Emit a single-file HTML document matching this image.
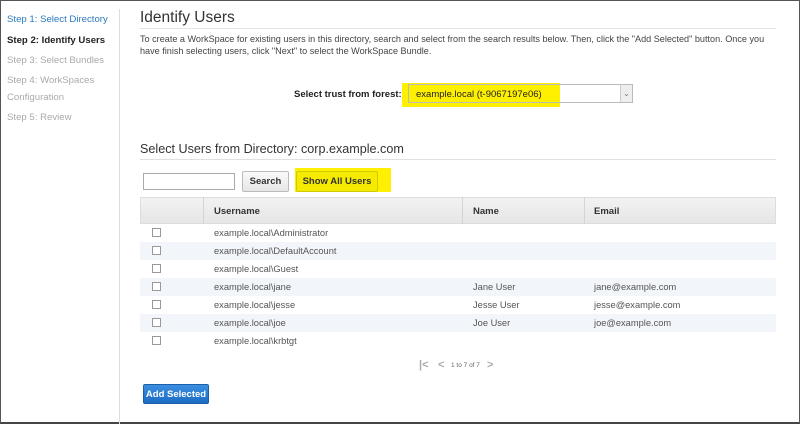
<!DOCTYPE html>
<html><head><style>
*{margin:0;padding:0;box-sizing:border-box}
body{width:800px;height:424px;overflow:hidden;background:#fff;font-family:"Liberation Sans",Arial,sans-serif;position:relative}
.frame{position:absolute;left:0;top:0;width:800px;height:424px;border:1px solid #555;border-bottom:2px solid #444}
.a{position:absolute;white-space:nowrap}
.nav{font-size:9.6px;color:#aaa;left:7px}
.row{position:absolute;left:140px;width:636px;height:18px;font-size:9.3px;color:#555}
.row.alt{background:#f2f5fa}
.row span{position:absolute;top:4px}
.cb{position:absolute;left:12px;top:4px;width:9px;height:9px;border:1px solid #999;background:#fff}
</style></head><body>
<div class="frame"></div>
<div class="a nav" style="top:14px;color:#2a7ac0">Step 1: Select Directory</div>
<div class="a nav" style="top:35px;color:#222;font-weight:bold">Step 2: Identify Users</div>
<div class="a nav" style="top:55px">Step 3: Select Bundles</div>
<div class="a nav" style="top:75px">Step 4: WorkSpaces</div>
<div class="a nav" style="top:92px">Configuration</div>
<div class="a nav" style="top:112px">Step 5: Review</div>
<div class="a" style="left:119px;top:9px;width:1px;height:415px;background:#ddd"></div>

<div class="a" style="left:140px;top:9px;font-size:15.5px;color:#333">Identify Users</div>
<div class="a" style="left:140px;top:28px;width:636px;height:1px;background:#e4e4e4"></div>
<div class="a" style="left:140px;top:33px;font-size:9.1px;color:#444;line-height:12px">To create a WorkSpace for existing users in this directory, search and select from the search results below. Then, click the "Add Selected" button. Once you<br>have finish selecting users, click "Next" to select the WorkSpace Bundle.</div>

<div class="a" style="left:294px;top:89px;font-size:9.5px;font-weight:bold;color:#222">Select trust from forest:</div>
<div class="a" style="left:402px;top:83px;width:158px;height:24px;background:#ffef00"></div>
<div class="a" style="left:408px;top:84px;width:225px;height:19px;border:1px solid #bbb;background:#fff"></div>
<div class="a" style="left:409px;top:85px;width:151px;height:17px;background:#fff000"></div>
<div class="a" style="left:620px;top:85px;width:12px;height:17px;background:#eee;border-left:1px solid #ccc;font-size:8px;color:#777;text-align:center;line-height:17px">⌄</div>
<div class="a" style="left:416px;top:89px;font-size:9.5px;color:#222">example.local (t-9067197e06)</div>

<div class="a" style="left:140px;top:142px;font-size:12.6px;color:#333">Select Users from Directory: corp.example.com</div>
<div class="a" style="left:140px;top:159px;width:636px;height:1px;background:#e0e0e0"></div>

<div class="a" style="left:143px;top:173px;width:92px;height:17px;border:1px solid #aaa;background:#fff"></div>
<div class="a" style="left:242px;top:171px;width:47px;height:21px;border:1px solid #bbb;border-radius:2px;background:linear-gradient(#fafafa,#e6e6e6);font-size:9.5px;font-weight:bold;color:#333;text-align:center;line-height:19px">Search</div>
<div class="a" style="left:295px;top:168px;width:96px;height:24px;background:#ffef00"></div>
<div class="a" style="left:296px;top:171px;width:82px;height:21px;border:1px solid #cc0;border-radius:2px;background:#f6eb00;font-size:9.5px;font-weight:bold;color:#333;text-align:center;line-height:19px">Show All Users</div>

<div class="a" style="left:140px;top:197px;width:636px;height:27px;background:linear-gradient(#f2f2f2,#e6e6e6);border:1px solid #ddd"></div>
<div class="a" style="left:203px;top:197px;width:1px;height:27px;background:#d4d4d4"></div>
<div class="a" style="left:462px;top:197px;width:1px;height:27px;background:#d4d4d4"></div>
<div class="a" style="left:584px;top:197px;width:1px;height:27px;background:#d4d4d4"></div>
<div class="a" style="left:214px;top:206px;font-size:9.5px;font-weight:bold;color:#333">Username</div>
<div class="a" style="left:473px;top:206px;font-size:9.5px;font-weight:bold;color:#333">Name</div>
<div class="a" style="left:594px;top:206px;font-size:9.5px;font-weight:bold;color:#333">Email</div>

<div class="row" style="top:224px"><div class="cb"></div><span style="left:74px">example.local\Administrator</span></div>
<div class="row alt" style="top:242px"><div class="cb"></div><span style="left:74px">example.local\DefaultAccount</span></div>
<div class="row" style="top:260px"><div class="cb"></div><span style="left:74px">example.local\Guest</span></div>
<div class="row alt" style="top:278px"><div class="cb"></div><span style="left:74px">example.local\jane</span><span style="left:333px">Jane User</span><span style="left:454px">jane@example.com</span></div>
<div class="row" style="top:296px"><div class="cb"></div><span style="left:74px">example.local\jesse</span><span style="left:333px">Jesse User</span><span style="left:454px">jesse@example.com</span></div>
<div class="row alt" style="top:314px"><div class="cb"></div><span style="left:74px">example.local\joe</span><span style="left:333px">Joe User</span><span style="left:454px">joe@example.com</span></div>
<div class="row" style="top:332px"><div class="cb"></div><span style="left:74px">example.local\krbtgt</span></div>

<div class="a" style="left:419px;top:359px;font-size:11px;color:#aaa;font-weight:bold">|&lt;</div>
<div class="a" style="left:438px;top:359px;font-size:11px;color:#aaa;font-weight:bold">&lt;</div>
<div class="a" style="left:451px;top:362px;font-size:6.5px;color:#666">1 to 7 of 7</div>
<div class="a" style="left:487px;top:359px;font-size:11px;color:#aaa;font-weight:bold">&gt;</div>

<div class="a" style="left:143px;top:384px;width:66px;height:20px;border:1px solid #1a5fa8;border-radius:2px;background:linear-gradient(#3b8ee0,#1c6cc4);font-size:9.5px;font-weight:bold;color:#fff;text-align:center;line-height:19px;padding-top:0">Add Selected</div>
</body></html>
